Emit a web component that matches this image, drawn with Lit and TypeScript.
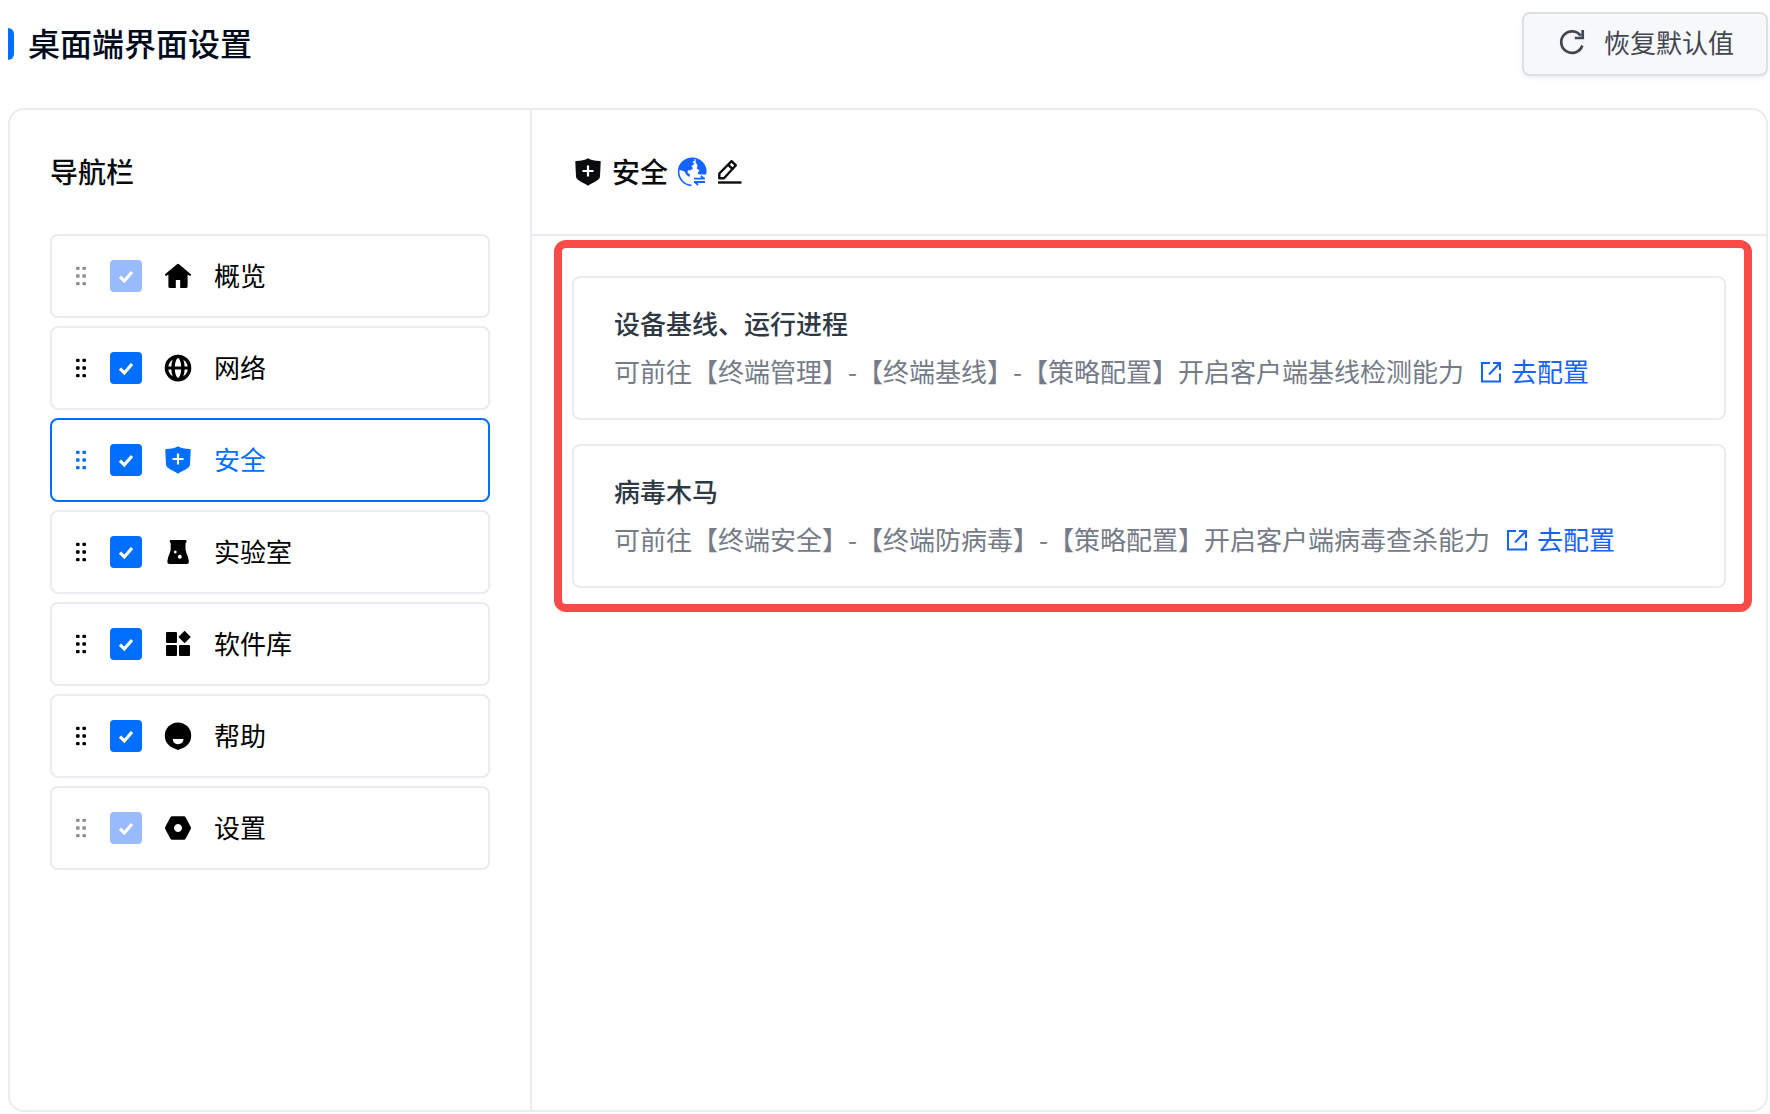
import { LitElement, html, svg, css, nothing } from "lit";
import { customElement, state } from "lit/decorators.js";
import { classMap } from "lit/directives/class-map.js";

interface NavItem {
  id: string;
  label: string;
  locked?: boolean;
  checked: boolean;
}

interface Feature {
  title: string;
  description: string;
}

const shield = svg`<path d="M14 .3C17 2 20.500 2.900 26 3Q26.800 3 26.700 4L26 18.500C25.700 22.500 18.500 24.500 14 27.800C9.500 24.500 2.300 22.500 2 18.500L1.300 4Q1.200 3 2 3C7.500 2.900 11 2 14 .3Z"/><path d="M14 7.500V18.500M8.500 13H19.500" stroke="#fff" stroke-width="2.200"/>`;

const glyphs: Record<string, unknown> = {
  overview: svg`<path d="M13 2.200Q14 1.500 15 2.200L27.200 12.600L26.300 14L23.600 12.800V24.500Q23.600 26 22 26H16.200V18H11.800V26H6Q4.400 26 4.400 24.500V12.800L1.700 14L.8 12.600Z"/>`,
  network: svg`<g fill="none" stroke="currentColor" stroke-width="3.400"><circle cx="14" cy="14" r="11.600"/><ellipse cx="14" cy="14" rx="5" ry="11.600"/><path d="M2 14H26" stroke-width="3"/></g>`,
  security: shield,
  lab: svg`<path fill-rule="evenodd" d="M6.500 2H21.700Q22.500 2 22.500 3V4.200L21.500 5V11.500Q22 14.500 24 19L24.900 23.500Q25 26 22.700 26H5.500Q3.200 26 3.300 23.500L4.200 19Q6.200 14.500 6.700 11.500V5L5.800 4.200V3Q5.800 2 6.500 2ZM11.300 12.600a1.400 1.400 0 1 0 .01 0ZM15.800 16.700a2 2 0 1 0 .01 0Z"/>`,
  library: svg`<rect x="2" y="2" width="11" height="11" rx="1"/><rect x="2" y="15" width="11" height="11" rx="1"/><rect x="15" y="15" width="11" height="11" rx="1"/><path d="M20.600.8L26.800 7L20.600 13.200L14.400 7Z" stroke-linejoin="round"/>`,
  help: svg`<circle cx="14" cy="13.700" r="13.200"/><path d="M10 25.800L14 28.200L18 25.800Z"/><path d="M8.600 17H19.600Q19 22.200 14 22.200Q9.200 22.200 8.600 17Z" fill="#fff"/>`,
  settings: svg`<path fill-rule="evenodd" d="M8 2.200H20Q21 2.200 21.600 3.200L26.800 13Q27.200 14 26.800 15L21.600 24.800Q21 25.800 20 25.800H8Q7 25.800 6.400 24.800L1.200 15Q.8 14 1.200 13L6.400 3.200Q7 2.200 8 2.200ZM14 10a4 4 0 1 0 .01 0Z"/>`,
};

const icon = (name: string) =>
  html`<svg class="icon" viewBox="0 0 28 28" fill="currentColor" aria-hidden="true">${glyphs[name]}</svg>`;

const gripIcon = html`<svg class="grip-icon" viewBox="0 0 14 20" fill="currentColor" aria-hidden="true">
  ${[3.8, 10.2].map((x) =>
    [2.4, 10, 17.6].map((y) => svg`<rect x=${x - 1.8} y=${y - 1.7} width="3.600" height="3.400" rx="1"/>`)
  )}
</svg>`;

const tickIcon = html`<svg class="tick" viewBox="0 0 32 32" fill="none" stroke="#fff" stroke-width="3.200" aria-hidden="true">
  <path d="M10 16.700L14.300 21L22 12"/>
</svg>`;

const refreshIcon = html`<svg class="refresh" viewBox="0 0 24 24" fill="none" stroke="currentColor" stroke-width="2.700" aria-hidden="true">
  <path d="M22.300 15.500A10.800 10.800 0 1 1 20.800 5.800"/><path d="M22.700 0V8H14.800"/>
</svg>`;

const translateIcon = html`<svg class="icon" viewBox="0 0 28 28" fill="currentColor" aria-hidden="true">
  <path d="M13.500 27.400A13.600 13.600 0 1 1 27.800 14" fill="none" stroke="currentColor" stroke-width="1.600"/>
  <path d="M.6 11.500C2 4 8 0 15.500 0L16.800 2.500L14.500 4L16.500 6L13.500 8L15 10.500L12 12.500L10 12L9.500 14.500L12 16.500L11.500 19L8.500 17L6.500 13.500L3.500 12.500Z"/>
  <path d="M17.800.6C24.500 2.500 28.500 8.500 28.400 16.500H21L19.500 15L21.500 12.500L18.800 10.500L19.500 7L17.500 4.500Z"/>
  <path d="M16 20.700H27M22.800 17.800L26 20.700M27 24H16M20 27L17 24" fill="none" stroke="currentColor" stroke-width="1.800"/>
</svg>`;

const editIcon = html`<svg class="icon" viewBox="0 0 28 28" fill="none" stroke="currentColor" stroke-width="2.400" aria-hidden="true">
  <path d="M3.300 20.200V15.500L15.600 3.200L19.900 7.300L8 20.200Z" stroke-linejoin="round"/><path d="M12.300 6.800L16.200 10.600"/><path d="M2 24.500H25.500"/>
</svg>`;

const externalIcon = html`<svg class="external" viewBox="0 0 24 24" fill="none" stroke="currentColor" stroke-width="2" aria-hidden="true">
  <path d="M11 3H3V21.500H21V13.500"/><path d="M14 3H21V10M21 3L10 14.500"/>
</svg>`;

@customElement("app-root")
export class AppRoot extends LitElement {
  @state() private selected = "security";

  @state() private items: NavItem[] = [
    { id: "overview", label: "概览", locked: true, checked: true },
    { id: "network", label: "网络", checked: true },
    { id: "security", label: "安全", checked: true },
    { id: "lab", label: "实验室", checked: true },
    { id: "library", label: "软件库", checked: true },
    { id: "help", label: "帮助", checked: true },
    { id: "settings", label: "设置", locked: true, checked: true },
  ];

  private features: Feature[] = [
    {
      title: "设备基线、运行进程",
      description: "可前往【终端管理】-【终端基线】-【策略配置】开启客户端基线检测能力",
    },
    {
      title: "病毒木马",
      description: "可前往【终端安全】-【终端防病毒】-【策略配置】开启客户端病毒查杀能力",
    },
  ];

  static styles = css`
    :host {
      --primary: #006eff;
      --line: #ebecf1;
      display: flex;
      flex-direction: column;
      box-sizing: border-box;
      min-height: 100vh;
      padding: 12px 2px 2px 8px;
      background: #fff;
      color: #000;
      font: 400 26px/40px "Noto Sans CJK SC", sans-serif;
    }
    * {
      box-sizing: border-box;
    }
    h1,
    h2,
    h3,
    p,
    ul {
      margin: 0;
      padding: 0;
    }
    svg {
      display: block;
      flex: none;
      overflow: visible;
    }
    button {
      margin: 0;
      padding: 0;
      border: 0;
      background: none;
      color: inherit;
      font: inherit;
      cursor: pointer;
    }
    .icon {
      width: 28px;
      height: 28px;
    }
    .text {
      padding-bottom: 2px;
    }
    .top {
      display: flex;
      align-items: center;
      justify-content: space-between;
      margin-bottom: 32px;
    }
    .title {
      display: flex;
      align-items: center;
      gap: 14px;
      color: #020b1c;
      font-size: 32px;
      font-weight: 500;
    }
    .title .text {
      padding-bottom: 4px;
    }
    .title::before {
      content: "";
      width: 6px;
      height: 32px;
      border-radius: 0 6px 6px 0;
      background: var(--primary);
    }
    .reset {
      display: flex;
      align-items: center;
      gap: 20px;
      height: 64px;
      padding: 0 32px 4px 36px;
      border: 2px solid #dcdfe7;
      border-radius: 8px;
      background: #f7f8fa;
      box-shadow: 0 2px 4px rgb(30 40 60 / 8%);
      color: #41464f;
    }
    .refresh,
    .external {
      width: 24px;
      height: 24px;
    }
    .panel {
      flex: 1;
      display: grid;
      grid-template-columns: 522px minmax(0, 1fr);
      border: 2px solid var(--line);
      border-radius: 16px;
    }
    .side {
      padding: 0 40px;
      border-right: 2px solid var(--line);
    }
    .heading {
      display: flex;
      align-items: center;
      height: 124px;
      color: #0b0c0e;
    }
    .heading-text {
      font-size: 28px;
      font-weight: 500;
    }
    .list {
      display: flex;
      flex-direction: column;
      gap: 8px;
      list-style: none;
    }
    .item {
      display: flex;
      align-items: center;
      gap: 22px;
      height: 84px;
      padding: 0 22px;
      border: 2px solid var(--line);
      border-radius: 8px;
    }
    .item.active {
      border-color: var(--primary);
      color: var(--primary);
    }
    .grip {
      cursor: grab;
    }
    .grip:disabled {
      color: #8f8f8f;
      cursor: default;
    }
    .grip-icon {
      width: 14px;
      height: 20px;
    }
    .check {
      display: grid;
      width: 32px;
      height: 32px;
    }
    .check > * {
      grid-area: 1 / 1;
    }
    .box {
      appearance: none;
      width: 32px;
      height: 32px;
      margin: 0;
      border: 2px solid #c9cdd8;
      border-radius: 4px;
      background: #fff;
    }
    .box:checked {
      border-color: var(--primary);
      background: var(--primary);
    }
    .box:disabled {
      border-color: #99bbff;
      background: #99bbff;
    }
    .tick {
      width: 32px;
      height: 32px;
      pointer-events: none;
    }
    .entry {
      flex: 1;
      display: flex;
      align-items: center;
      gap: 22px;
      text-align: left;
    }
    .main-head {
      gap: 10px;
      height: 126px;
      padding: 0 42px;
      border-bottom: 2px solid var(--line);
    }
    .translate {
      color: #1664ff;
    }
    .features {
      display: flex;
      flex-direction: column;
      gap: 24px;
      margin: 4px 14px 0 22px;
      padding: 28px 18px 16px 10px;
      border: 8px solid #f84a46;
      border-radius: 12px;
    }
    .card {
      padding: 22px 40px;
      border: 2px solid var(--line);
      border-radius: 8px;
      line-height: 46px;
    }
    .card-title {
      color: #2f3845;
      font-size: 26px;
      font-weight: 500;
    }
    .row {
      display: flex;
      flex-wrap: wrap;
      align-items: center;
      column-gap: 15px;
      color: #757b88;
    }
    .link {
      display: flex;
      align-items: center;
      gap: 8px;
      color: #1664ff;
      text-decoration: none;
    }
  `;

  private toggle(id: string) {
    this.items = this.items.map((i) => (i.id === id ? { ...i, checked: !i.checked } : i));
  }

  private renderItem(item: NavItem) {
    const active = item.id === this.selected;
    return html`<li class=${classMap({ item: true, active })}>
      <button class="grip" type="button" aria-label="拖动${item.label}" ?disabled=${item.locked}>${gripIcon}</button>
      <label class="check">
        <input
          class="box"
          type="checkbox"
          aria-label=${item.label}
          .checked=${item.checked}
          ?disabled=${item.locked}
          @change=${() => this.toggle(item.id)}
        />
        ${item.checked ? tickIcon : nothing}
      </label>
      <button class="entry" type="button" @click=${() => (this.selected = item.id)}>
        ${icon(item.id)}<span class="text">${item.label}</span>
      </button>
    </li>`;
  }

  render() {
    const current = this.items.find((i) => i.id === this.selected)!;
    return html`
      <header class="top">
        <h1 class="title"><span class="text">桌面端界面设置</span></h1>
        <button class="reset" type="button">${refreshIcon}<span>恢复默认值</span></button>
      </header>
      <div class="panel">
        <nav class="side">
          <div class="heading"><h2 class="heading-text text">导航栏</h2></div>
          <ul class="list">
            ${this.items.map((i) => this.renderItem(i))}
          </ul>
        </nav>
        <main>
          <div class="heading main-head">
            ${icon(current.id)}
            <h2 class="heading-text text">${current.label}</h2>
            <button class="translate" type="button" aria-label="多语言">${translateIcon}</button>
            <button type="button" aria-label="编辑">${editIcon}</button>
          </div>
          <section class="features">
            ${this.features.map(
              (f) => html`<article class="card">
                <h3 class="card-title text">${f.title}</h3>
                <div class="row">
                  <p class="text">${f.description}</p>
                  <a class="link" href="#">${externalIcon}<span class="text">去配置</span></a>
                </div>
              </article>`
            )}
          </section>
        </main>
      </div>
    `;
  }
}
